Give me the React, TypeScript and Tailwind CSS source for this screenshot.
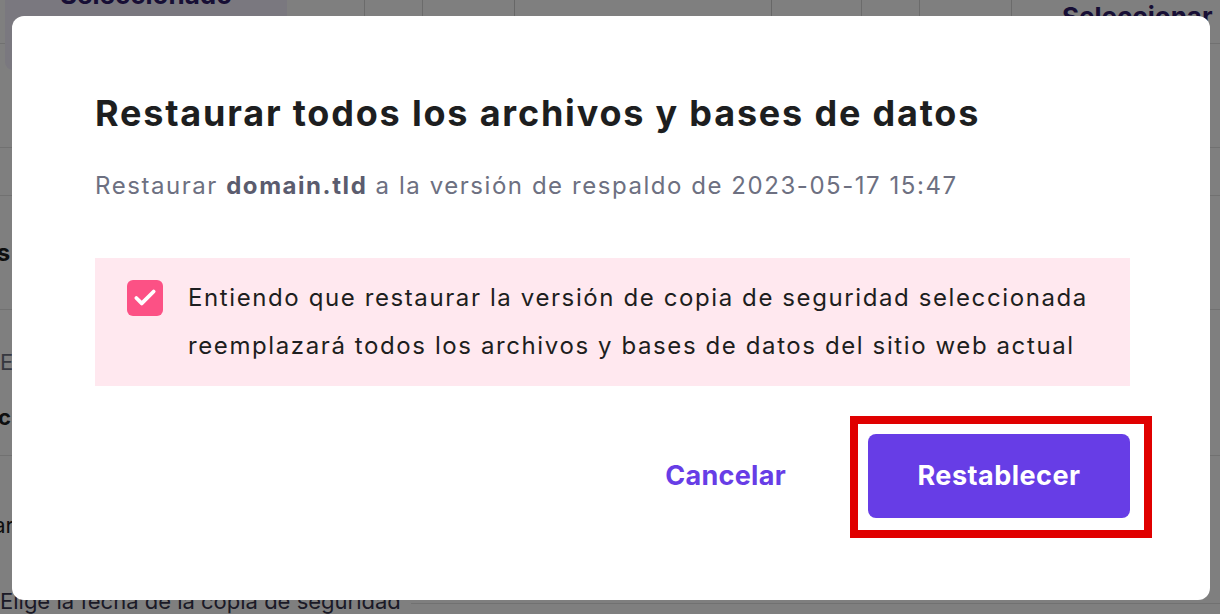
import { Check } from "lucide-react";

const font = { fontFamily: "Inter, 'Noto Sans', sans-serif" };

const BackgroundPage = () => {
  return (
    <div className="w-[1220px] h-[614px] overflow-hidden bg-white text-[#1d1e20]">
      {/* fila de pestañas (cortada arriba) */}
      <div className="flex h-[44px] border-b border-[#e3e3e3]">
        <div className="ml-[5px] w-[282px] h-[90px] -mt-[20px] bg-[#f4f0ff] rounded-[8px] flex justify-center pt-[2px] text-[#2f1c6a] font-bold text-[26px] leading-none">
          Seleccionado
        </div>
        <div className="w-[78px] border-r border-[#d6d6d6]" />
        <div className="w-[58px] border-r border-[#d6d6d6]" />
        <div className="w-[91px]" />
        <div className="w-[258px] h-[40px] -mt-[10px] border border-[#cfcfcf] rounded-[8px]" />
        <div className="w-[90px] border-r border-[#d6d6d6]" />
        <div className="w-[58px] border-r border-[#d6d6d6]" />
        <div className="w-[92px] border-r border-[#d6d6d6]" />
        <div className="flex-1 pl-[50px] text-[#2f1c6a] font-bold text-[26px] leading-none pt-[4px] whitespace-nowrap">
          Seleccionar
        </div>
      </div>
      <div className="h-[104px] border-b border-[#e3e3e3]" />
      <div className="h-[48px] border-b border-[#e3e3e3]" />
      <div className="h-[114px] border-b border-[#e3e3e3] flex items-center font-bold text-[24px]">
        <span className="-ml-[85px] whitespace-nowrap">Detalles</span>
      </div>
      <div className="h-[146px] border-b border-[#e3e3e3] flex flex-col pt-[36px] gap-[22px] text-[22px]">
        <span className="text-[#6d7081]">E</span>
        <span className="font-bold -ml-[2px] text-[#1d1e20]">c</span>
      </div>
      <div className="h-[130px] pt-[58px] text-[22px] leading-none">
        <span className="-ml-[86px] whitespace-nowrap inline-block">Restaurar</span>
      </div>
      <div className="flex items-center h-[30px]">
        <span className="text-[22px] text-[#36344d] whitespace-nowrap">Elige la fecha de la copia de seguridad</span>
        <div className="flex-1 border-b border-[#e3e3e3] ml-[10px] mt-[4px]" />
      </div>
    </div>
  );
};

const App = () => {
  return (
    <div className="relative w-[1220px] h-[614px] overflow-hidden" style={font}>
      <BackgroundPage />

      {/* capa oscura + modal */}
      <div className="absolute inset-0 bg-black/50 pl-[12px] pt-[16px]">
        <div className="w-[1198px] h-[584px] bg-white rounded-[12px] pl-[83px] pr-[80px] pt-[77px]">
          <h2 className="text-[36px] leading-[40px] font-bold text-[#1d1e20] tracking-[1.8px] whitespace-nowrap">
            Restaurar todos los archivos y bases de datos
          </h2>
          <p className="mt-[37px] text-[24px] leading-[32px] text-[#6d7081] tracking-[1.55px] whitespace-nowrap">
            Restaurar <span className="font-bold text-[#5b5c6e]">domain.tld</span> a la versión de respaldo de 2023-05-17 15:47
          </p>

          <div className="mt-[56px] bg-[#ffe8ef] flex items-start gap-[25px] pl-[32px] pr-[20px] py-[16px]">
            <div className="mt-[6px] w-[36px] h-[36px] shrink-0 rounded-[6px] bg-[#fc5185] flex items-center justify-center">
              <Check className="w-[26px] h-[26px] text-white" strokeWidth={3.5} />
            </div>
            <p className="text-[24px] leading-[48px] text-[#1d1e20] tracking-[1.6px]">
              Entiendo que restaurar la versión de copia de seguridad seleccionada reemplazará todos los archivos y bases de datos del sitio web actual
            </p>
          </div>

          <div className="mt-[48px] flex justify-end items-center gap-[82px]">
            <button className="text-[27px] font-bold text-[#673de6] tracking-[0.3px]">Cancelar</button>
            <div className="relative">
              <button className="w-[262px] h-[84px] rounded-[8px] bg-[#673de6] text-white text-[27px] font-bold tracking-[0.5px]">
                Restablecer
              </button>
              {/* recuadro rojo de resaltado */}
              <div className="absolute -left-[18px] -right-[22px] -top-[18px] -bottom-[20px] border-[8px] border-[#e00000] pointer-events-none" />
            </div>
          </div>
        </div>
      </div>
    </div>
  );
};

export default App;
